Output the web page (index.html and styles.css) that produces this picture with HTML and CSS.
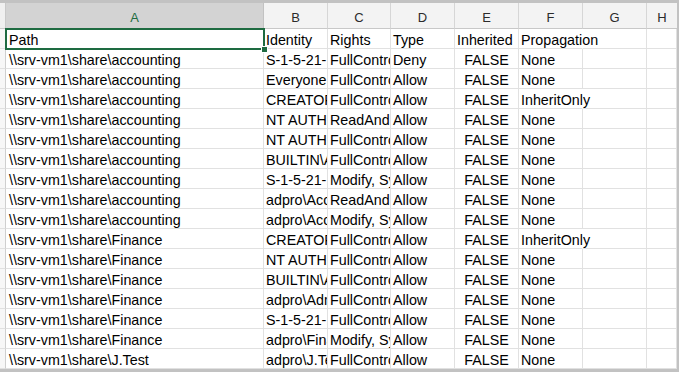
FILE: index.html
```html
<!DOCTYPE html>
<html>
<head>
<meta charset="utf-8">
<link rel="stylesheet" href="styles.css">
</head>
<body>
<div class="frame">
  <div class="sheet">
    <div class="row head">
      <div class="h strip"></div>
      <div class="h sel">A</div>
      <div class="h">B</div>
      <div class="h">C</div>
      <div class="h">D</div>
      <div class="h">E</div>
      <div class="h">F</div>
      <div class="h">G</div>
      <div class="h last">H</div>
    </div>

    <div class="row">
      <div class="c strip"></div>
      <div class="c active">Path<span class="selbox"><span class="handle"></span></span></div>
      <div class="c">Identity</div>
      <div class="c">Rights</div>
      <div class="c">Type</div>
      <div class="c">Inherited</div>
      <div class="c spill">Propagation</div>
      <div class="c"></div>
      <div class="c"></div>
    </div>

    <div class="row"><div class="c strip"></div><div class="c">\\srv-vm1\share\accounting</div><div class="c">S-1-5-21-1234567890</div><div class="c">FullControl</div><div class="c">Deny</div><div class="c mid">FALSE</div><div class="c">None</div><div class="c"></div><div class="c"></div></div>
    <div class="row"><div class="c strip"></div><div class="c">\\srv-vm1\share\accounting</div><div class="c">Everyone</div><div class="c">FullControl</div><div class="c">Allow</div><div class="c mid">FALSE</div><div class="c">None</div><div class="c"></div><div class="c"></div></div>
    <div class="row"><div class="c strip"></div><div class="c">\\srv-vm1\share\accounting</div><div class="c">CREATOR OWNER</div><div class="c">FullControl</div><div class="c">Allow</div><div class="c mid">FALSE</div><div class="c spill">InheritOnly</div><div class="c"></div><div class="c"></div></div>
    <div class="row"><div class="c strip"></div><div class="c">\\srv-vm1\share\accounting</div><div class="c">NT AUTHORITY\SYSTEM</div><div class="c">ReadAndExecute</div><div class="c">Allow</div><div class="c mid">FALSE</div><div class="c">None</div><div class="c"></div><div class="c"></div></div>
    <div class="row"><div class="c strip"></div><div class="c">\\srv-vm1\share\accounting</div><div class="c">NT AUTHORITY\SYSTEM</div><div class="c">FullControl</div><div class="c">Allow</div><div class="c mid">FALSE</div><div class="c">None</div><div class="c"></div><div class="c"></div></div>
    <div class="row"><div class="c strip"></div><div class="c">\\srv-vm1\share\accounting</div><div class="c">BUILTIN\Administrators</div><div class="c">FullControl</div><div class="c">Allow</div><div class="c mid">FALSE</div><div class="c">None</div><div class="c"></div><div class="c"></div></div>
    <div class="row"><div class="c strip"></div><div class="c">\\srv-vm1\share\accounting</div><div class="c">S-1-5-21-1234567890</div><div class="c">Modify, Synchronize</div><div class="c">Allow</div><div class="c mid">FALSE</div><div class="c">None</div><div class="c"></div><div class="c"></div></div>
    <div class="row"><div class="c strip"></div><div class="c">\\srv-vm1\share\accounting</div><div class="c">adpro\Accounting</div><div class="c">ReadAndExecute</div><div class="c">Allow</div><div class="c mid">FALSE</div><div class="c">None</div><div class="c"></div><div class="c"></div></div>
    <div class="row"><div class="c strip"></div><div class="c">\\srv-vm1\share\accounting</div><div class="c">adpro\Accounting</div><div class="c">Modify, Synchronize</div><div class="c">Allow</div><div class="c mid">FALSE</div><div class="c">None</div><div class="c"></div><div class="c"></div></div>
    <div class="row"><div class="c strip"></div><div class="c">\\srv-vm1\share\Finance</div><div class="c">CREATOR OWNER</div><div class="c">FullControl</div><div class="c">Allow</div><div class="c mid">FALSE</div><div class="c spill">InheritOnly</div><div class="c"></div><div class="c"></div></div>
    <div class="row"><div class="c strip"></div><div class="c">\\srv-vm1\share\Finance</div><div class="c">NT AUTHORITY\SYSTEM</div><div class="c">FullControl</div><div class="c">Allow</div><div class="c mid">FALSE</div><div class="c">None</div><div class="c"></div><div class="c"></div></div>
    <div class="row"><div class="c strip"></div><div class="c">\\srv-vm1\share\Finance</div><div class="c">BUILTIN\Administrators</div><div class="c">FullControl</div><div class="c">Allow</div><div class="c mid">FALSE</div><div class="c">None</div><div class="c"></div><div class="c"></div></div>
    <div class="row"><div class="c strip"></div><div class="c">\\srv-vm1\share\Finance</div><div class="c">adpro\Admins</div><div class="c">FullControl</div><div class="c">Allow</div><div class="c mid">FALSE</div><div class="c">None</div><div class="c"></div><div class="c"></div></div>
    <div class="row"><div class="c strip"></div><div class="c">\\srv-vm1\share\Finance</div><div class="c">S-1-5-21-1234567890</div><div class="c">FullControl</div><div class="c">Allow</div><div class="c mid">FALSE</div><div class="c">None</div><div class="c"></div><div class="c"></div></div>
    <div class="row"><div class="c strip"></div><div class="c">\\srv-vm1\share\Finance</div><div class="c">adpro\Finance</div><div class="c">Modify, Synchronize</div><div class="c">Allow</div><div class="c mid">FALSE</div><div class="c">None</div><div class="c"></div><div class="c"></div></div>
    <div class="row"><div class="c strip"></div><div class="c">\\srv-vm1\share\J.Test</div><div class="c">adpro\J.Test</div><div class="c">FullControl</div><div class="c">Allow</div><div class="c mid">FALSE</div><div class="c">None</div><div class="c"></div><div class="c"></div></div>
  </div>
</div>
</body>
</html>
```

FILE: styles.css
```css
html, body {
  margin: 0;
  padding: 0;
  background: #bdbdbd;
}
.frame {
  width: 679px;
  height: 372px;
  box-sizing: border-box;
  padding: 3px 2px 3px 0;
  background: #c2c2c2;
  overflow: hidden;
}
.sheet {
  width: 677px;
  background: #ffffff;
  font-family: "Liberation Sans", Arial, sans-serif;
}
.row {
  display: grid;
  grid-template-columns: 6px 258px 64px 63px 64px 64px 64px 64px 30px;
  height: 20px;
}
.row.head {
  height: 26px;
}
.h {
  box-sizing: border-box;
  height: 26px;
  padding-top: 5px;
  background: #f3f3f3;
  border-right: 1px solid #d6d6d6;
  border-bottom: 1px solid #c8c8c8;
  font-size: 13px;
  line-height: 20px;
  text-align: center;
  color: #2b2b2b;
  overflow: hidden;
  white-space: nowrap;
}
.h.strip {
  background: #f0f0f0;
  border-right: 1px solid #c8c8c8;
}
.h.sel {
  background: #d3d3d3;
  color: #1e6b41;
  border-right: 1px solid #c2c2c2;
}
.h.last {
  border-right: none;
}
.c {
  box-sizing: border-box;
  height: 20px;
  padding-top: 3px;
  border-right: 1px solid #e1e1e1;
  border-bottom: 1px solid #e1e1e1;
  font-size: 14.3px;
  line-height: 16px;
  padding-left: 2px;
  color: #000000;
  white-space: nowrap;
  overflow: hidden;
}
.c.strip {
  background: #f7f7f7;
  border-right: 1px solid #cfcfcf;
  padding: 0;
}
.c.mid {
  text-align: center;
  padding-left: 0;
}
.c.spill {
  overflow: visible;
  border-right-color: transparent;
  position: relative;
  z-index: 1;
}
.c.active {
  position: relative;
  overflow: visible;
  padding-left: 3px;
  z-index: 2;
}
.row > .c:nth-child(2) {
  padding-left: 3px;
}
.selbox {
  position: absolute;
  left: -1px;
  top: -1px;
  width: 260px;
  height: 22px;
  box-sizing: border-box;
  border: 2px solid #1e6b41;
}
.handle {
  position: absolute;
  right: -4px;
  bottom: -4px;
  width: 5px;
  height: 5px;
  background: #1e6b41;
  outline: 1px solid #ffffff;
}
```
